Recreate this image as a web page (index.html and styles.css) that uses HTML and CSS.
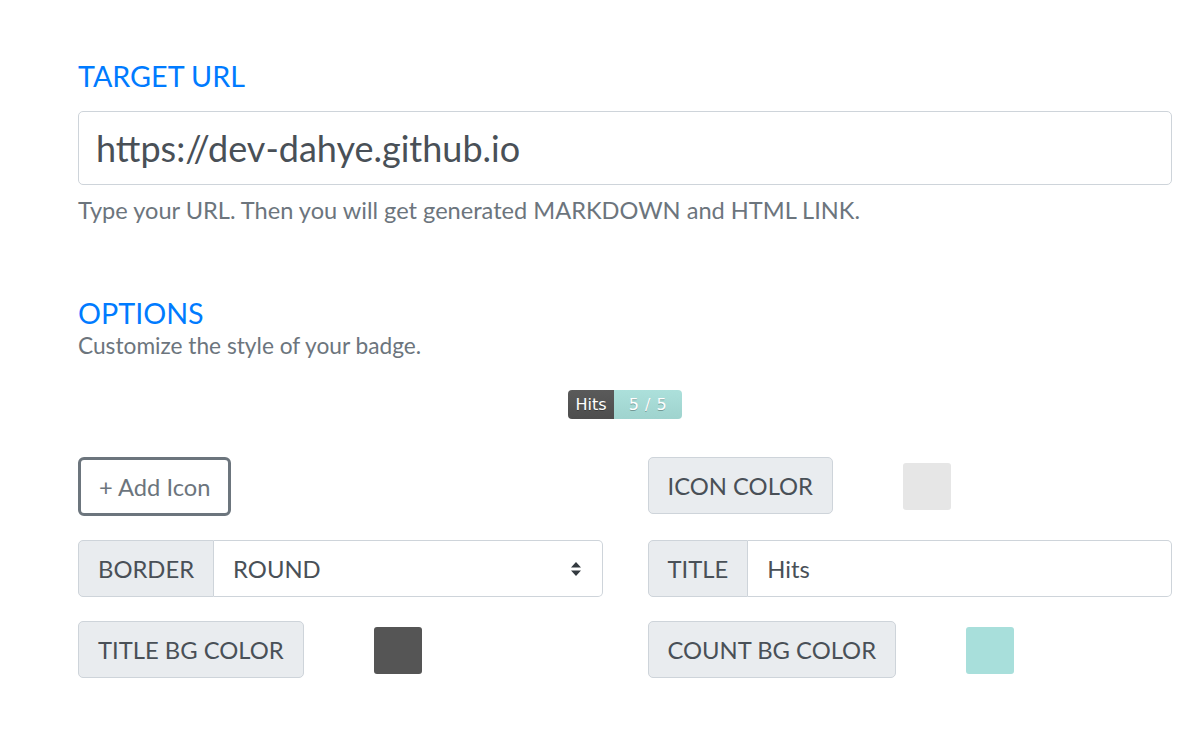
FILE: index.html
```html
<!DOCTYPE html>
<html lang="en">
<head>
<meta charset="utf-8">
<title>Hits badge generator</title>
<link rel="stylesheet" href="styles.css">
</head>
<body>
<main class="container">
  <section class="section">
    <h3 class="section-title">TARGET URL</h3>
    <div class="url-input">https://dev-dahye.github.io</div>
    <p class="help">Type your URL. Then you will get generated MARKDOWN and HTML LINK.</p>
  </section>

  <section class="section options">
    <h3 class="section-title">OPTIONS</h3>
    <p class="help sub">Customize the style of your badge.</p>

    <div class="badge-preview">
      <div class="badge">
        <span class="badge-title">Hits</span>
        <span class="badge-count">5 / 5</span>
      </div>
    </div>

    <div class="option-grid">
      <div class="cell">
        <button class="btn-outline" type="button">+ Add Icon</button>
      </div>
      <div class="cell color-row">
        <span class="group-label">ICON COLOR</span>
        <span class="swatch swatch-icon"></span>
      </div>

      <div class="cell input-group">
        <span class="group-label">BORDER</span>
        <div class="group-field select-field">
          <span>ROUND</span>
          <svg class="select-arrow" width="12" height="16" viewBox="0 0 12 16"><path d="M6 1 L11 6.5 H1 Z M1 9.5 H11 L6 15 Z" fill="#343a40"/></svg>
        </div>
      </div>
      <div class="cell input-group">
        <span class="group-label">TITLE</span>
        <div class="group-field"><span>Hits</span></div>
      </div>

      <div class="cell color-row">
        <span class="group-label">TITLE BG COLOR</span>
        <span class="swatch swatch-title"></span>
      </div>
      <div class="cell color-row">
        <span class="group-label">COUNT BG COLOR</span>
        <span class="swatch swatch-count"></span>
      </div>
    </div>
  </section>
</main>
</body>
</html>
```

FILE: styles.css
```css
html, body {
  margin: 0;
  padding: 0;
  background: #fff;
}

body {
  font-family: Lato, "Open Sans", "Liberation Sans", sans-serif;
  color: #495057;
}

.container {
  padding: 57px 29px 40px 78px;
}

.section-title {
  margin: 0;
  font-size: 28.7px;
  font-weight: 400;
  line-height: 38px;
  color: #007bff;
}

.url-input {
  margin-top: 16px;
  height: 72px;
  border: 1px solid #ced4da;
  border-radius: 5px;
  padding: 0 17px;
  display: flex;
  align-items: center;
  font-size: 36px;
  color: #495057;
}

.help {
  margin: 10px 0 0;
  font-size: 23.6px;
  line-height: 30px;
  color: #6c757d;
}

.options {
  margin-top: 69px;
}

.help.sub {
  margin-top: -1px;
  font-size: 22.7px;
}

.badge-preview {
  display: flex;
  justify-content: center;
  margin-top: 29px;
}

.badge {
  display: flex;
  height: 29px;
  border-radius: 4px;
  overflow: hidden;
  font-family: "DejaVu Sans", Verdana, sans-serif;
  font-size: 16px;
  color: #fff;
  text-shadow: 0 1px 0 rgba(1, 1, 1, 0.3);
}

.badge-title,
.badge-count {
  display: flex;
  align-items: center;
  justify-content: center;
}

.badge-title {
  width: 46px;
  background: linear-gradient(#5a5a5a, #4d4d4d);
}

.badge-count {
  width: 68px;
  background: linear-gradient(#ace0db, #9fd3ce);
  letter-spacing: 0.5px;
}

.option-grid {
  margin-top: 38px;
  display: grid;
  grid-template-columns: 1fr 1fr;
  column-gap: 45px;
  row-gap: 24px;
  align-items: start;
}

.cell {
  display: flex;
}

.btn-outline {
  height: 59px;
  padding: 0 18px;
  border: 3px solid #6c757d;
  border-radius: 6px;
  background: #fff;
  font-family: inherit;
  font-size: 23.7px;
  color: #6c757d;
}

.group-label {
  box-sizing: border-box;
  height: 57px;
  display: flex;
  align-items: center;
  padding: 0 19px;
  background: #e9ecef;
  border: 1px solid #ced4da;
  border-radius: 5px;
  font-size: 23.8px;
  color: #495057;
}

.input-group {
  height: 57px;
}

.input-group .group-label {
  border-radius: 5px 0 0 5px;
}

.group-field {
  flex: 1;
  box-sizing: border-box;
  height: 57px;
  display: flex;
  align-items: center;
  justify-content: space-between;
  padding: 0 19px;
  border: 1px solid #ced4da;
  border-left: none;
  border-radius: 0 5px 5px 0;
  font-size: 23.8px;
  color: #495057;
}

.select-arrow {
  margin-right: 1px;
}

.color-row {
  align-items: center;
  height: 57px;
}

.swatch {
  width: 48px;
  height: 47px;
  margin-left: 70px;
  margin-top: 1px;
  border-radius: 3px;
}

.swatch-icon { background: #e6e6e6; }
.swatch-title { background: #555555; }
.swatch-count { background: #a8dfdb; }
```
